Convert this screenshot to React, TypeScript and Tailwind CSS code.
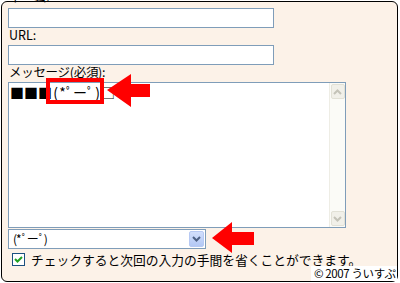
import React from "react";

const cells: { ch: string; w: number }[] = [
  { ch: "■", w: 14 },
  { ch: "■", w: 14 },
  { ch: "■", w: 14 },
  { ch: "(", w: 7 },
  { ch: "*", w: 7 },
  { ch: "ﾟ", w: 7 },
  { ch: "ー", w: 14 },
  { ch: "ﾟ", w: 7 },
  { ch: ")", w: 7 },
  { ch: "□", w: 14 },
];

export default function App() {
  return (
    <div className="relative w-[400px] h-[283px] bg-white overflow-hidden pt-[1px] pl-[1px] font-['Noto_Sans_CJK_JP','Noto_Sans',sans-serif] text-black">
      <div className="relative w-[397px] h-[281px] border border-black rounded-[6px] bg-[#fcf2e8] flex flex-col items-start">
        <div className="ml-[7px] -mt-[11px] leading-[12px] text-[12.5px]">ネーム:</div>
        <div className="ml-[6px] mt-[5px] w-[266px] h-[20px] border border-[#7f9db9] bg-white" />
        <div className="ml-[7px] leading-[14px] text-[12.5px]">URL:</div>
        <div className="ml-[6px] mt-[3px] w-[266px] h-[20px] border border-[#7f9db9] bg-white" />
        <div className="ml-[7px] leading-[14px] text-[12.5px] tracking-[-0.3px]">メッセージ(必須):</div>
        <div className="ml-[6px] mt-[3px] w-[338px] h-[146px] border border-[#7f9db9] bg-white flex">
          <div className="flex-1 pl-[1px] pt-[1px] flex items-start leading-[16px] text-[14px]">
            {cells.map((c, i) => (
              <span key={i} className="inline-block text-center" style={{ width: c.w }}>
                {c.ch}
              </span>
            ))}
          </div>
          <div className="w-[16px] h-full bg-[#fbfbf7] border-l border-[#eeede5] flex flex-col justify-between items-center py-[1px]">
            <div className="w-[14px] h-[15px] rounded-[2px] bg-[#f1f0e9] border border-[#e2e1d6] flex items-center justify-center">
              <svg width="9" height="6" viewBox="0 0 9 6">
                <path d="M1 5 L4.5 1.5 L8 5" stroke="#c4c3b8" strokeWidth="2" fill="none" />
              </svg>
            </div>
            <div className="w-[14px] h-[15px] rounded-[2px] bg-[#f1f0e9] border border-[#e2e1d6] flex items-center justify-center">
              <svg width="9" height="6" viewBox="0 0 9 6">
                <path d="M1 1 L4.5 4.5 L8 1" stroke="#c4c3b8" strokeWidth="2" fill="none" />
              </svg>
            </div>
          </div>
        </div>
        <div className="ml-[6px] mt-[1px] w-[198px] h-[20px] border border-[#7f9db9] bg-white flex items-center p-[1px]">
          <div className="flex-1 pl-[3px] text-[12px] leading-[16px] tracking-[-1px]">(*ﾟーﾟ)</div>
          <div className="w-[15px] h-full rounded-[2px] bg-gradient-to-b from-[#d2dffc] to-[#b3c8f5] border border-[#b7c9f3] flex items-center justify-center">
            <svg width="9" height="6" viewBox="0 0 9 6">
              <path d="M1 1 L4.5 4.5 L8 1" stroke="#4d6185" strokeWidth="2" fill="none" />
            </svg>
          </div>
        </div>
        <div className="mt-[3px] h-[15px] flex items-center">
          <div className="ml-[10px] w-[13px] h-[13px] border border-[#1c5180] bg-white flex items-center justify-center">
            <svg width="9" height="9" viewBox="0 0 9 9">
              <path d="M1 4 L3.5 6.5 L8 2" stroke="#21a121" strokeWidth="2" fill="none" />
            </svg>
          </div>
          <span className="ml-[6px] text-[12.75px] leading-[15px]">チェックすると次回の入力の手間を省くことができます。</span>
        </div>
        <div className="absolute right-0 bottom-0 w-[86px] h-[15px] bg-white pl-[3px] text-[11.5px] leading-[15px] tracking-[-0.4px] whitespace-nowrap">
          © 2007 ういすぷ
        </div>
      </div>
      <div className="absolute left-[46px] top-[78px] w-[58px] h-[26px] border-[4px] border-[#ff0000]" />
      <svg className="absolute left-0 top-0" width="400" height="283" viewBox="0 0 400 283">
        <polygon points="107,90 131,74 131,84 150,84 150,97 131,97 131,107" fill="#ff0000" />
        <polygon points="212,238 232,222 232,232 254,232 254,245 232,245 232,253" fill="#ff0000" />
      </svg>
    </div>
  );
}
